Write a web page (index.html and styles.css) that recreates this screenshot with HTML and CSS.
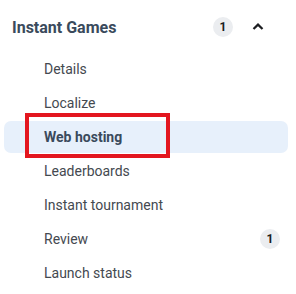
FILE: index.html
```html
<!DOCTYPE html>
<html>
<head>
<meta charset="utf-8">
<link rel="stylesheet" href="styles.css">
</head>
<body>
<nav class="nav">
  <div class="header">
    <span class="header-title">Instant Games</span>
    <span class="badge">1</span>
    <span class="chevron">
      <svg width="14" height="14" viewBox="0 0 14 14"><path d="M2.5 9 L7 4.6 L11.5 9" fill="none" stroke="#1c1e21" stroke-width="2.2"/></svg>
    </span>
  </div>
  <ul class="items">
    <li class="item">Details</li>
    <li class="item">Localize</li>
    <li class="item active">Web hosting</li>
    <li class="item">Leaderboards</li>
    <li class="item">Instant tournament</li>
    <li class="item">Review<span class="badge">1</span></li>
    <li class="item">Launch status</li>
  </ul>
  <div class="callout"></div>
</nav>
</body>
</html>
```
FILE: styles.css
```css
html, body {
  margin: 0;
  padding: 0;
  background: #ffffff;
}
body {
  width: 296px;
  height: 294px;
  overflow: hidden;
  font-family: Roboto, "Liberation Sans", sans-serif;
}
.nav {
  position: relative;
  padding: 11px 8px 0 4px;
}
.header {
  display: flex;
  align-items: center;
  height: 32px;
  padding: 0 18px 0 8px;
}
.header-title {
  flex: 1;
  font-size: 16px;
  font-weight: 700;
  color: #3a4a5c;
}
.badge {
  display: inline-flex;
  align-items: center;
  justify-content: center;
  width: 20px;
  height: 20px;
  border-radius: 50%;
  background: #ebedf0;
  color: #1c1e21;
  font-size: 12px;
  font-weight: 700;
}
.chevron {
  display: flex;
  align-items: center;
  justify-content: center;
  width: 24px;
  height: 24px;
  margin-left: 13px;
}
.items {
  list-style: none;
  margin: 10px 0 0;
  padding: 0;
  display: flex;
  flex-direction: column;
  gap: 2px;
}
.item {
  display: flex;
  align-items: center;
  justify-content: space-between;
  height: 32px;
  padding: 0 8px 0 40px;
  font-size: 14px;
  color: #444950;
  border-radius: 7px;
}
.item.active {
  background: #e7f0fb;
  font-weight: 700;
  color: #3a4a5c;
}
.callout {
  position: absolute;
  left: 25px;
  top: 113px;
  width: 137px;
  height: 37px;
  border: 4px solid #e3161f;
}
```
